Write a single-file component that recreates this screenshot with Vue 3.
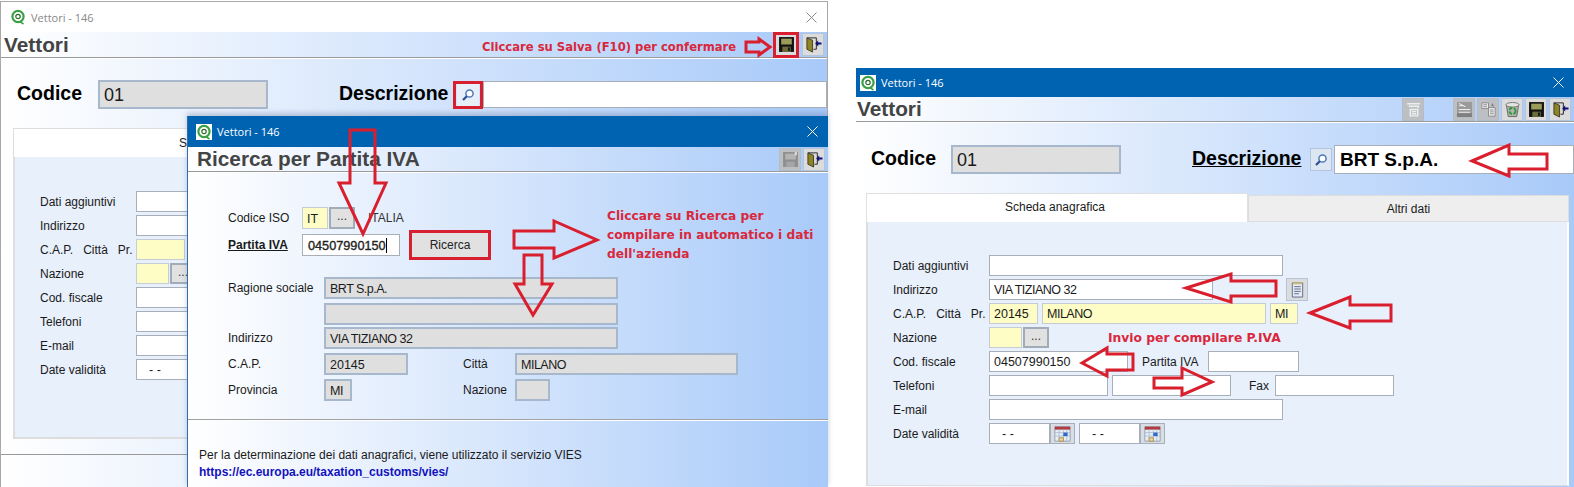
<script setup>
const arrows = [
  '746,42 759,42 759,39 770,47 759,55 759,52 746,52',
  '350,130 375,130 375,183 386,183 363,234 339,183 350,183',
  '514,231 554,231 554,221 597,240 554,258 554,248 514,248',
  '524,255 542,255 542,284 552,284 533,315 515,284 524,284',
  '1472,161 1509,145 1509,154 1547,154 1547,169 1509,169 1509,176',
  '1186,288 1231,274 1231,281 1276,281 1276,296 1231,296 1231,302',
  '1310,313 1350,297 1350,305 1391,305 1391,321 1350,321 1350,328',
  '1082,363 1107,348 1107,354 1133,354 1133,370 1107,370 1107,376',
  '1154,378 1182,378 1182,368 1212,382 1182,395 1182,388 1154,388'
]
const capLabel = 'C.A.P.\u00a0\u00a0 Città\u00a0\u00a0 Pr.'
const leftLabels = ['Dati aggiuntivi', 'Indirizzo', capLabel, 'Nazione', 'Cod. fiscale', 'Telefoni', 'E-mail', 'Date validità']
</script>

<template>
  <div class="desktop">
    <svg class="defs" width="0" height="0">
      <symbol id="logo" viewBox="0 0 16 16">
        <circle cx="8" cy="7.5" r="5.6" fill="#fff" stroke="#3ba044" stroke-width="2.2" />
        <circle cx="8" cy="7.5" r="2.2" fill="none" stroke="#2c6a2c" stroke-width="1.2" />
        <path d="M10 12.5l3.5 2.6" stroke="#3ba044" stroke-width="1.6" fill="none" />
      </symbol>
      <symbol id="x" viewBox="0 0 11 11">
        <path d="M.5.5l10 10M10.5.5l-10 10" stroke="currentColor" stroke-width="1" fill="none" />
      </symbol>
      <symbol id="save" viewBox="0 0 16 16">
        <path d="M1 1h14v14H1z" fill="#111" />
        <path d="M3 2.5h10v5.5H3z" fill="#9a9c5a" />
        <path d="M4 10h8v5H4z" fill="#6a6a3a" />
        <path d="M9.5 10.8h1.6v3.2H9.5z" fill="#111" />
      </symbol>
      <symbol id="saveoff" viewBox="0 0 16 16">
        <path d="M1 1h14v14H1z" fill="#8e8e8e" />
        <path d="M3 2.5h10v5.5H3z" fill="#b4b4b4" />
        <path d="M4 10h8v5H4z" fill="#a5a5a5" />
        <path d="M12 1h2v3h-2z" fill="#ddd" />
      </symbol>
      <symbol id="door" viewBox="0 0 18 18">
        <path d="M2 2h10v12H9" fill="none" stroke="#222" stroke-width="1" />
        <path d="M2 2l6 2.5V17l-6-3z" fill="#8f8420" stroke="#222" stroke-width=".8" />
        <path d="M17.5 7H14V4.8L10.8 8l3.2 3.2V9h3.5z" fill="#10107a" />
      </symbol>
      <symbol id="lens" viewBox="0 0 16 16">
        <circle cx="9.5" cy="6.5" r="3.6" fill="#fff" stroke="#4a78b8" stroke-width="1.5" />
        <path d="M6.8 9.2L3 13" stroke="#2c4f96" stroke-width="2.2" />
      </symbol>
      <symbol id="tree" viewBox="0 0 16 16">
        <path d="M2 2.5h12M3.5 5h9v1.5M5 8h7v6H5zM6.5 10h4M6.5 12h4" fill="none" stroke="#eee" stroke-width="1.4" />
      </symbol>
      <symbol id="form1" viewBox="0 0 18 18">
        <path d="M1 1h16v16H1z" fill="#9a9a9a" />
        <path d="M3 2.5l7 3.5M3 5h4M3 9h12M3 12h12" stroke="#eee" stroke-width="1.1" />
        <path d="M1 13h16v4H1z" fill="#808080" />
      </symbol>
      <symbol id="form2" viewBox="0 0 18 18">
        <path d="M2 2h7v6H2zM9 7h7v9H9z" fill="#eee" stroke="#8a8a8a" />
        <path d="M10.5 9.5h4M10.5 11.5h4M10.5 13.5h4M3.5 4h4M3.5 6h4" stroke="#8a8a8a" />
        <path d="M13 2l2 4-3-1z" fill="#777" />
      </symbol>
      <symbol id="bin" viewBox="0 0 18 18">
        <path d="M2.5 4l2 12.5h9l2-12.5z" fill="#b4b4ac" stroke="#666" />
        <ellipse cx="9" cy="4" rx="7" ry="2.4" fill="#e4e4de" stroke="#777" />
        <circle cx="9" cy="10.5" r="3.3" fill="none" stroke="#2c9a3c" stroke-width="2" stroke-dasharray="4 1.5" />
      </symbol>
      <symbol id="notes" viewBox="0 0 16 18">
        <path d="M2.5 2h11v15h-11z" fill="#e6eaf3" stroke="#5a6a8a" />
        <path d="M3 1.5h10v2H3z" fill="#c9bd7a" />
        <path d="M4.5 6h7M4.5 8.5h7M4.5 11h7M4.5 13.5h5" stroke="#5a6a8a" />
      </symbol>
      <symbol id="cal" viewBox="0 0 20 20">
        <path d="M1 2h18v17H1z" fill="#e7eef6" stroke="#8d96a4" />
        <path d="M1 2h18v3.5H1z" fill="#b33a40" />
        <path d="M1 9h18M1 13h18M6 5v14M11 5v14M15 5v14" stroke="#a8bcd0" />
        <path d="M11 9h5v4h-5z" fill="#2f66c8" />
        <path d="M6 15h5v4H6z" fill="#ecd9a0" stroke="#b08a40" />
      </symbol>
    </svg>

    <!-- Left window -->
    <section class="win win-back">
      <header class="titlebar titlebar-plain">
        <svg class="logo"><use href="#logo" /></svg>
        <span class="title">Vettori - 146</span>
        <svg class="close"><use href="#x" /></svg>
      </header>
      <div class="head">
        <h1>Vettori</h1>
        <div class="tools">
          <span class="redbox tool-frame"><button class="tb"><svg class="ic"><use href="#save" /></svg></button></span>
          <button class="tb"><svg class="ic"><use href="#door" /></svg></button>
        </div>
      </div>
      <div class="code-row back-code">
        <label class="big code-label">Codice</label>
        <div class="field ro code-field">01</div>
        <label class="big desc-label">Descrizione</label>
        <span class="redbox lens-frame"><button class="tb lens"><svg class="ic-s"><use href="#lens" /></svg></button></span>
        <div class="field big-input"></div>
      </div>
      <div class="back-tab">Scheda anagrafica</div>
      <div class="back-panel">
        <div v-for="(l, i) in leftLabels" :key="l" class="row">
          <label class="lab">{{ l }}</label>
          <div v-if="i === 2" class="field yellow back-cap"></div>
          <template v-else-if="i === 3">
            <div class="field yellow w33"></div>
            <button class="dots">...</button>
          </template>
          <div v-else-if="i === 7" class="field back-wide date-text">- -</div>
          <div v-else class="field back-wide"></div>
        </div>
      </div>
      <div class="back-foot"></div>
    </section>

    <!-- Dialog -->
    <section class="win win-dialog">
      <header class="titlebar">
        <svg class="logo logo-white"><use href="#logo" /></svg>
        <span class="title">Vettori - 146</span>
        <svg class="close"><use href="#x" /></svg>
      </header>
      <div class="head">
        <h1>Ricerca per Partita IVA</h1>
        <div class="tools">
          <button class="tb off"><svg class="ic"><use href="#saveoff" /></svg></button>
          <button class="tb"><svg class="ic"><use href="#door" /></svg></button>
        </div>
      </div>
      <div class="d-form">
        <div class="d-row">
          <label class="lab d-lab1">Codice ISO</label>
          <div class="field yellow iso">IT</div>
          <button class="dots iso-dots">...</button>
          <span class="lab iso-name">ITALIA</span>
        </div>
        <div class="d-row">
          <label class="lab d-lab1 bold-u">Partita IVA</label>
          <div class="field piva">04507990150<i class="caret"></i></div>
          <span class="redbox search-frame"><button class="search-btn">Ricerca</button></span>
        </div>
        <div class="d-row gap21">
          <label class="lab d-lab2">Ragione sociale</label>
          <div class="field ro w293 al">BRT S.p.A.</div>
        </div>
        <div class="d-row gap4">
          <span class="d-lab2"></span>
          <div class="field ro w293"></div>
        </div>
        <div class="d-row gap2">
          <label class="lab d-lab2">Indirizzo</label>
          <div class="field ro w293 al">VIA TIZIANO 32</div>
        </div>
        <div class="d-row gap4">
          <label class="lab d-lab2">C.A.P.</label>
          <div class="field ro w84">20145</div>
          <label class="lab d-lab3">Città</label>
          <div class="field ro w223 al">MILANO</div>
        </div>
        <div class="d-row gap4">
          <label class="lab d-lab2">Provincia</label>
          <div class="field ro w28 al">MI</div>
          <label class="lab d-lab3 nazione">Nazione</label>
          <div class="field ro w35"></div>
        </div>
      </div>
      <div class="d-foot">
        <p>Per la determinazione dei dati anagrafici, viene utilizzato il servizio VIES</p>
        <a>https://ec.europa.eu/taxation_customs/vies/</a>
      </div>
    </section>

    <!-- Right window -->
    <section class="win win-right">
      <header class="titlebar">
        <svg class="logo logo-white"><use href="#logo" /></svg>
        <span class="title">Vettori - 146</span>
        <svg class="close"><use href="#x" /></svg>
      </header>
      <div class="head">
        <h1>Vettori</h1>
        <div class="tools tools-right">
          <button class="tb off"><svg class="ic"><use href="#tree" /></svg></button>
          <button class="tb off spaced"><svg class="ic"><use href="#form1" /></svg></button>
          <button class="tb off"><svg class="ic"><use href="#form2" /></svg></button>
          <button class="tb"><svg class="ic"><use href="#bin" /></svg></button>
          <button class="tb"><svg class="ic"><use href="#save" /></svg></button>
          <button class="tb"><svg class="ic"><use href="#door" /></svg></button>
        </div>
      </div>
      <div class="code-row right-code">
        <label class="big code-label">Codice</label>
        <div class="field ro code-field">01</div>
        <label class="big desc-label-r">Descrizione</label>
        <button class="tb lens"><svg class="ic-s"><use href="#lens" /></svg></button>
        <div class="field big-input brt">BRT S.p.A.</div>
      </div>
      <div class="tabs">
        <div class="tab active">Scheda anagrafica</div>
        <div class="tab">Altri dati</div>
      </div>
      <div class="panel">
        <div class="row">
          <label class="lab">Dati aggiuntivi</label>
          <div class="field w294"></div>
        </div>
        <div class="row">
          <label class="lab">Indirizzo</label>
          <div class="field w224 al">VIA TIZIANO 32</div>
          <button class="tb notes"><svg class="ic"><use href="#notes" /></svg></button>
        </div>
        <div class="row">
          <label class="lab">{{ capLabel }}</label>
          <div class="field yellow w49">20145</div>
          <div class="field yellow w224b al">MILANO</div>
          <div class="field yellow w28b al">MI</div>
        </div>
        <div class="row">
          <label class="lab">Nazione</label>
          <div class="field yellow w33"></div>
          <button class="dots">...</button>
        </div>
        <div class="row">
          <label class="lab">Cod. fiscale</label>
          <div class="field w139">04507990150</div>
          <label class="lab piva-lab">Partita IVA</label>
          <div class="field w91"></div>
        </div>
        <div class="row">
          <label class="lab">Telefoni</label>
          <div class="field w119"></div>
          <div class="field w119 ml4"></div>
          <label class="lab fax">Fax</label>
          <div class="field w119"></div>
        </div>
        <div class="row">
          <label class="lab">E-mail</label>
          <div class="field w294"></div>
        </div>
        <div class="row">
          <label class="lab">Date validità</label>
          <div class="field w61 date-text">- -</div>
          <button class="cal"><svg class="ic"><use href="#cal" /></svg></button>
          <div class="field w61 ml4 date-text">- -</div>
          <button class="cal"><svg class="ic"><use href="#cal" /></svg></button>
        </div>
      </div>
    </section>

    <!-- Annotations drawn on top of the screenshots -->
    <svg class="arrows" viewBox="0 0 1574 487">
      <polygon v-for="p in arrows" :key="p" :points="p" />
    </svg>
    <p class="note note-save">Cliccare su Salva (F10) per confermare</p>
    <p class="note note-search">Cliccare su Ricerca per<br />compilare in automatico i dati<br />dell'azienda</p>
    <p class="note note-invio">Invio per compilare P.IVA</p>
  </div>
</template>

<style scoped>
.desktop {
  position: relative;
  width: 1574px;
  height: 487px;
  overflow: hidden;
  background: #fff;
  font-family: "Liberation Sans", Arial, sans-serif;
  font-size: 12px;
  color: #1a1a1a;
}
.defs { position: absolute; }
* { box-sizing: border-box; }

.win {
  position: absolute;
  display: flex;
  flex-direction: column;
  overflow: hidden;
  background: linear-gradient(90deg, #fff 0%, #d5e5fc 50%, #a8caf9 100%);
}
.win-back { left: 0; top: 1px; width: 828px; height: 486px; border: 1px solid #a8a8a8; border-bottom: 0; }
.win-dialog { left: 187px; top: 116px; width: 641px; height: 371px; border-left: 1px solid #2f6fa8; box-shadow: 0 -3px 5px rgba(90, 110, 150, .35); }
.win-right { left: 856px; top: 68px; width: 718px; height: 419px; }

.titlebar {
  flex: none;
  height: 31px;
  display: flex;
  align-items: center;
  padding-left: 8px;
  background: #0063b1;
  color: #fff;
}
.win-right .titlebar { height: 29px; padding-left: 4px; }
.titlebar-plain { height: 30px; background: #fff; color: #888; }
.logo { width: 16px; height: 16px; margin-right: 5px; flex: none; }
.logo-white { background: #fff; }
.titlebar-plain .logo { margin-left: 1px; margin-right: 5px; }
.title { font-family: "Open Sans", sans-serif; font-size: 11px; }
.close { width: 11px; height: 11px; margin-left: auto; margin-right: 10px; flex: none; }

.head {
  flex: none;
  height: 25px;
  display: flex;
  align-items: center;
  border-bottom: 1px solid #9a9a9a;
  box-shadow: 0 1px 0 #fff;
  padding-left: 9px;
}
.win-back .head { height: 26px; padding-left: 3px; }
.win-right .head { padding-left: 1px; }
h1 { margin: 0; font-size: 20.8px; line-height: 24px; font-weight: 700; color: #444; }
.tools { margin-left: auto; display: flex; align-items: center; gap: 2px; padding-right: 3px; }
.tools-right { padding-right: 3px; gap: 2px; }
.tb {
  width: 22px;
  height: 23px;
  padding: 0;
  display: flex;
  align-items: center;
  justify-content: center;
  border: 1px solid #b4c4da;
  background: #dcdcdc;
}
.tb.off { background: #bcbfc3; border-color: #b4bcc6; }
.spaced { margin-left: 27px; }
.ic { width: 17px; height: 17px; }
.ic-s { width: 16px; height: 16px; }
.redbox { display: flex; align-items: center; justify-content: center; border: 3px solid #d81f2f; flex: none; }
.tool-frame { width: 26px; height: 26px; margin-right: 1px; }
.tool-frame .tb { width: 20px; height: 20px; border: 0; }

.code-row { display: flex; align-items: center; flex: none; }
.back-code { margin-top: 22px; padding-left: 16px; height: 29px; }
.right-code { margin-top: 23px; padding-left: 15px; height: 29px; }
.big { font-size: 19.5px; font-weight: 700; color: #000; padding-bottom: 2px; }
.code-label { width: 81px; }
.right-code .code-label { width: 80px; }
.desc-label { width: 114px; margin-left: 71px; }
.desc-label-r { width: 118px; margin-left: 71px; text-decoration: underline; }
.lens-frame { width: 30px; height: 28px; }
.lens { width: 22px; height: 23px; background: #dde6f3; }
.lens-frame .lens { border: 0; width: 22px; height: 22px; background: #e7eefa; }

.field {
  height: 22px;
  flex: none;
  display: flex;
  align-items: center;
  padding: 1px 0 0 4px;
  background: #fff;
  border: 1px solid #a9afb8;
  font-size: 12.5px;
  white-space: nowrap;
  overflow: hidden;
}
.field.ro { background: #dfdfdf; border: 2px solid #a8b8cc; }
.field.yellow { background: #fdfdc5; border-color: #c6ccd4; }
.field.al { letter-spacing: -.5px; }
.field.code-field { width: 170px; height: 29px; font-size: 18px; padding-left: 4px; }
.field.big-input { flex: 1; min-width: 0; height: 27px; }
.right-code .field.big-input { height: 29px; margin-left: 2px; }
.field.brt { font-size: 19px; font-weight: 700; color: #000; padding-left: 5px; }
.dots {
  width: 26px;
  height: 22px;
  margin-left: 1px;
  padding: 0 0 4px;
  border: 2px solid #a2acb9;
  background: #e1e1e1;
  font: 12px "Liberation Sans", sans-serif;
  color: #333;
}

.back-tab {
  flex: none;
  margin: 19px 0 0 12px;
  width: 790px;
  height: 29px;
  padding: 7px 0 0 165px;
  background: #fff;
  border: 1px solid #ddd;
  border-bottom: 0;
}
.back-panel {
  flex: none;
  margin-left: 12px;
  width: 790px;
  height: 282px;
  padding: 34px 0 0 25px;
  background: #e8f0fc;
  border: 2px solid #ddd;
  border-top: 0;
  display: flex;
  flex-direction: column;
  gap: 3px;
}
.back-foot { margin-top: 15px; border-top: 1px solid #999; }
.back-wide { width: 300px; }
.back-cap { width: 49px; }
.row { flex: none; height: 21px; display: flex; align-items: center; }
.row .field, .row .dots { height: 21px; }
.lab { flex: none; font-size: 12px; white-space: pre; }
.row > .lab:first-child { width: 96px; }

.tabs { flex: none; margin: 19px 0 0 10px; display: flex; align-items: flex-end; height: 29px; }
.tab { display: flex; align-items: center; justify-content: center; }
.tab.active { width: 382px; height: 29px; background: #fff; border: 1px solid #e0e0e0; border-bottom: 0; padding: 0 4px 3px 0; }
.tab:not(.active) { width: 321px; height: 27px; background: #eee; border: 1px solid #ddd; }
.panel {
  flex: none;
  margin-left: 10px;
  width: 703px;
  height: 264px;
  padding: 33px 0 0 25px;
  background: #e8f0fc;
  border: 2px solid #fff;
  border-left-color: #ddd;
  border-top: 0;
  border-bottom: 1px solid #ddd;
  display: flex;
  flex-direction: column;
  gap: 3px;
}
.field.w294 { width: 294px; }
.field.w224 { width: 224px; }
.field.w224b { width: 224px; margin-left: 4px; }
.field.w49 { width: 49px; }
.field.w28b { width: 28px; margin-left: 4px; }
.field.w33 { width: 33px; }
.field.w139 { width: 139px; }
.field.w91 { width: 91px; }
.field.w119 { width: 119px; }
.field.w61 { width: 61px; }
.field.ml4 { margin-left: 4px; }
.piva-lab { margin-left: 14px; width: 66px; }
.fax { margin-left: 18px; width: 26px; }
.notes { margin-left: 73px; }
.field.date-text { padding-left: 12px; }
.cal {
  width: 25px;
  height: 21px;
  padding: 0;
  display: flex;
  align-items: center;
  justify-content: center;
  border: 1px solid #a9afb8;
  background: #d9dee5;
}

.d-form { flex: none; padding: 35px 0 0 40px; display: flex; flex-direction: column; }
.d-row { display: flex; align-items: center; height: 22px; margin-top: 5px; flex: none; }
.d-row:first-child { margin-top: 0; }
.d-lab1 { width: 74px; }
.d-lab2 { width: 96px; flex: none; }
.d-lab3 { margin-left: 55px; width: 52px; }
.nazione { margin-left: 111px; }
.d-row.gap21 { margin-top: 21px; }
.d-row.gap4 { margin-top: 4px; }
.d-row.gap2 { margin-top: 2px; }
.bold-u { font-weight: 700; text-decoration: underline; }
.field.iso { width: 26px; }
.iso-dots { margin-left: 1px; }
.iso-name { margin-left: 13px; color: #333; }
.field.piva { width: 98px; font-size: 12.7px; color: #222; padding-left: 5px; -webkit-text-stroke: .35px #222; }
.caret { display: inline-block; width: 1px; height: 15px; background: #000; }
.search-frame { width: 82px; height: 30px; margin-left: 9px; }
.search-btn { width: 76px; height: 24px; border: 0; background: #e1e1e1; font: 12px "Liberation Sans", sans-serif; color: #222; }
.field.w293 { width: 294px; }
.field.w84 { width: 84px; }
.field.w223 { width: 223px; }
.field.w28 { width: 28px; }
.field.w35 { width: 35px; }

.d-foot {
  margin-top: 18px;
  flex: 1;
  padding: 27px 0 0 11px;
  border-top: 1px solid #a0a0a0;
  box-shadow: inset 0 1px 0 #fff;
  line-height: 17px;
  font-size: 12px;
}
.d-foot p { margin: 0; }
.d-foot a { font-weight: 700; color: #1212bd; }

.arrows { position: absolute; left: 0; top: 0; width: 1574px; height: 487px; pointer-events: none; }
.arrows polygon { fill: none; stroke: #d91f2e; stroke-width: 3; }
.note {
  position: absolute;
  margin: 0;
  font-family: "DejaVu Sans", sans-serif;
  font-size: 12.2px;
  font-weight: 700;
  color: #d9283c;
  white-space: nowrap;
}
.note-save { left: 482px; top: 40px; font-size: 11.6px; }
.note-search { left: 607px; top: 207px; line-height: 19px; }
.note-invio { left: 1108px; top: 331px; font-size: 12.3px; }
</style>
